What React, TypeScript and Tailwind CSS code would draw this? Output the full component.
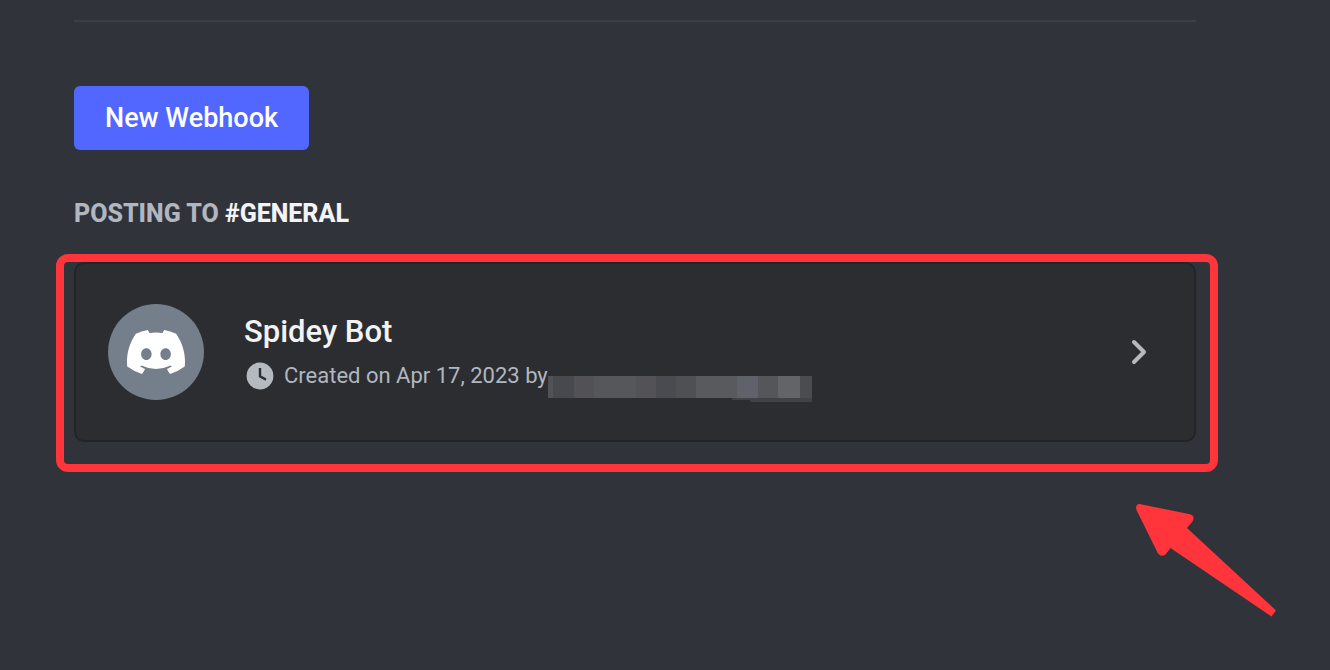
const DISCORD_PATH =
  'M107.7,8.07A105.15,105.15,0,0,0,81.47,0a72.06,72.06,0,0,0-3.36,6.83A97.68,97.68,0,0,0,49,6.83,72.37,72.37,0,0,0,45.64,0,105.89,105.89,0,0,0,19.39,8.09C2.79,32.65-1.71,56.6.54,80.21h0A105.73,105.73,0,0,0,32.71,96.36,77.7,77.7,0,0,0,39.6,85.25a68.42,68.42,0,0,1-10.85-5.18c.91-.66,1.8-1.34,2.66-2a75.57,75.57,0,0,0,64.32,0c.87.71,1.76,1.39,2.66,2a68.68,68.68,0,0,1-10.87,5.19,77,77,0,0,0,6.89,11.1A105.25,105.25,0,0,0,126.6,80.22h0C129.24,52.84,122.09,29.11,107.7,8.07ZM42.45,65.69C36.18,65.69,31,60,31,53s5-12.74,11.43-12.74S54,46,53.89,53,48.84,65.69,42.45,65.69Zm42.24,0C78.41,65.69,73.25,60,73.25,53s5-12.74,11.44-12.74S96.23,46,96.12,53,91.08,65.69,84.69,65.69Z'

function Avatar() {
  return (
    <span className="flex size-24 shrink-0 items-center justify-center rounded-full bg-[#747f8b]">
      <svg viewBox="0 0 127.14 96.36" className="w-[58px]" fill="#ffffff" aria-hidden="true">
        <path d={DISCORD_PATH} />
      </svg>
    </span>
  )
}

function ClockIcon() {
  return (
    <svg viewBox="0 0 32 32" className="size-8 shrink-0" aria-hidden="true">
      <circle cx="16" cy="16" r="13.4" fill="#b5bac1" />
      <path d="M16 8V16.4L22 19.6" fill="none" stroke="#2c2d31" strokeWidth="2.4" />
    </svg>
  )
}

function HiddenName() {
  return (
    <svg viewBox="0 0 264 26" className="absolute top-4 left-full h-[26px] w-[264px]" shapeRendering="crispEdges" aria-hidden="true">
      <path d="M184 0H264V26H202V24H184Z" fill="#404246" />
      <rect width="5" height="22" fill="#505256" />
      <rect x="5" width="21" height="22" fill="#48494e" />
      <rect x="26" width="20" height="22" fill="#525256" />
      <rect x="46" width="42" height="22" fill="#55575b" />
      <rect x="88" width="20" height="22" fill="#525257" />
      <rect x="108" width="20" height="22" fill="#494b50" />
      <rect x="128" width="20" height="22" fill="#4e5054" />
      <rect x="148" width="41" height="22" fill="#585a5d" />
      <rect x="189" width="21" height="22" fill="#5f616b" />
      <rect x="210" width="20" height="22" fill="#54565a" />
      <rect x="230" width="22" height="22" fill="#626468" />
      <rect x="252" width="12" height="22" fill="#4b4c50" />
    </svg>
  )
}

function Highlight() {
  return (
    <>
      <div className="pointer-events-none absolute -top-2 -right-[22px] -bottom-[30px] -left-[18px] rounded-xl border-8 border-[#ff353b]" />
      <svg viewBox="0 0 144 118" className="pointer-events-none absolute top-[240px] -right-[82px] h-[118px] w-[144px]" aria-hidden="true">
        <path
          d="M5.5 2L56 12.2Q61.5 14 58.5 19.5L53 26L142 108.5L137.5 114.5L36.5 46L31.5 52.5Q27.5 55.5 24 51.5L2.500 8Q1 2.500 5.500 2Z"
          fill="#ff353b"
        />
      </svg>
    </>
  )
}

export default function App() {
  return (
    <main className="min-h-screen overflow-hidden bg-[#31333b] pt-5 pr-[134px] pl-[74px] font-[Roboto,sans-serif]">
      <hr className="border-t-2 border-[#3d3f47]" />
      <button type="button" className="mt-16 block h-16 rounded-md bg-[#5167ff] px-[31px] text-[27px] leading-8 font-medium text-white">
        New Webhook
      </button>
      <h2 className="mt-12 text-[25px] leading-8 font-extrabold text-[#b0b7c0]">
        POSTING TO <span className="text-[#f2f3f5]">#GENERAL</span>
      </h2>
      <div className="relative mt-8">
        <button
          type="button"
          className="flex w-full items-center gap-10 rounded-[10px] border-2 border-[#232428] bg-[#2c2d31] px-8 py-10 text-left"
        >
          <Avatar />
          <span className="flex min-w-0 grow flex-col gap-2">
            <span className="text-[31px] leading-10 font-medium text-[#f2f3f5]">Spidey Bot</span>
            <span className="flex items-center gap-2">
              <ClockIcon />
              <span className="relative text-[22px] leading-8 whitespace-nowrap text-[#b0b7c0]">
                Created on Apr 17, 2023 by
                <HiddenName />
              </span>
            </span>
          </span>
          <svg viewBox="0 0 32 32" className="mr-2 size-8 shrink-0" fill="none" stroke="#b5bac1" strokeWidth="4" strokeLinecap="round" strokeLinejoin="round" aria-hidden="true">
            <path d="M12 6L22 16L12 26" />
          </svg>
        </button>
        <Highlight />
      </div>
    </main>
  )
}
